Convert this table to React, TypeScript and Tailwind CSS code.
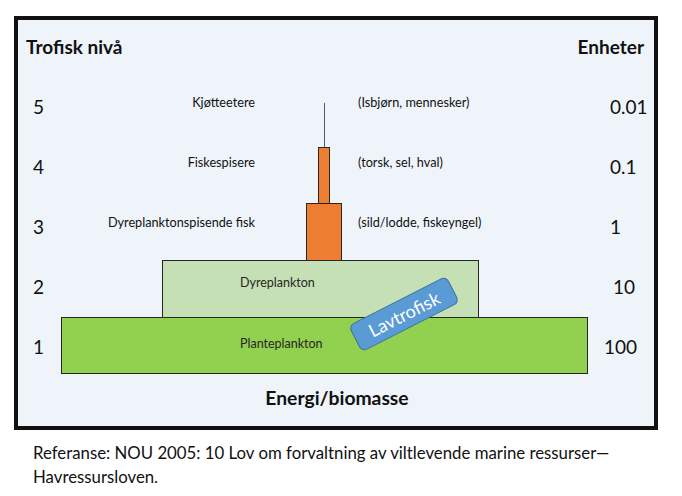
const rows = [
  { level: "5", left: "Kjøtteetere", right: "(Isbjørn, mennesker)", unit: "0.01", unitPad: "pl-[6px]" },
  { level: "4", left: "Fiskespisere", right: "(torsk, sel, hval)", unit: "0.1", unitPad: "pl-[6px]" },
  { level: "3", left: "Dyreplanktonspisende fisk", right: "(sild/lodde, fiskeyngel)", unit: "1", unitPad: "pl-[6px]" },
  { level: "2", left: "", right: "", unit: "10", unitPad: "pl-[9px]" },
  { level: "1", left: "", right: "", unit: "100", unitPad: "pl-0" },
];

function Pyramid() {
  return (
    <div className="absolute left-[43px] top-[83px] flex flex-col items-start">
      <div className="ml-[263px] h-[44px] w-px bg-[#595959]" />
      <div className="ml-[257px] h-[57px] w-[12px] border border-[#262626] bg-[#ed7d31]" />
      <div className="-mt-px ml-[245px] h-[58px] w-[36px] border border-[#262626] bg-[#ed7d31]" />
      <div className="-mt-px ml-[101px] flex h-[58px] w-[317px] items-center border border-[#262626] bg-[#c5e0b4] pb-[12px] pl-[77px] text-[12.5px] text-[#262626]">
        Dyreplankton
      </div>
      <div className="-mt-px flex h-[57px] w-[527px] items-center border border-[#262626] bg-[#92d050] pb-[3px] pl-[178px] text-[12.5px] text-[#262626]">
        Planteplankton
      </div>
    </div>
  );
}

export default function App() {
  return (
    <div
      className="h-[496px] w-[682px] bg-white pl-[14px] pt-[16px] text-[#111]"
      style={{ fontFamily: "Lato, 'Open Sans', sans-serif" }}
    >
      <div className="relative h-[414px] w-[644px] border-4 border-[#111] bg-[#eff4fa]">
        <Pyramid />

        <div className="absolute left-[331px] top-[279px] flex h-[30px] w-[110px] rotate-[-27deg] items-center justify-center rounded-md border border-[#41719c] bg-[#5b9bd5] text-[18px] text-white">
          Lavtrofisk
        </div>

        <div className="relative flex flex-col">
          <div className="flex h-[57px] items-center justify-between pb-[3px] pl-[8px] pr-[10px] text-[19px] font-bold">
            <span>Trofisk nivå</span>
            <span>Enheter</span>
          </div>

          {rows.map((r) => (
            <div key={r.level} className="flex h-[60px] items-center">
              <div className="w-[60px] pl-[15px] text-[19px]">{r.level}</div>
              <div className="w-[177px] pb-[9px] text-right text-[12.7px]">{r.left}</div>
              <div className="w-[103px]" />
              <div className="w-[246px] pb-[9px] text-[12.7px]">{r.right}</div>
              <div className={`w-[50px] text-[19px] ${r.unitPad}`}>{r.unit}</div>
            </div>
          ))}

          <div className="flex h-[42px] items-center justify-center pl-[2px] text-[19.3px] font-bold">
            Energi/biomasse
          </div>
        </div>
      </div>

      <p className="pl-[19px] pt-[11px] text-[16.8px] leading-[24px] text-[#111]">
        Referanse: NOU 2005: 10 Lov om forvaltning av viltlevende marine ressurser—
        <br />
        Havressursloven.
      </p>
    </div>
  );
}
